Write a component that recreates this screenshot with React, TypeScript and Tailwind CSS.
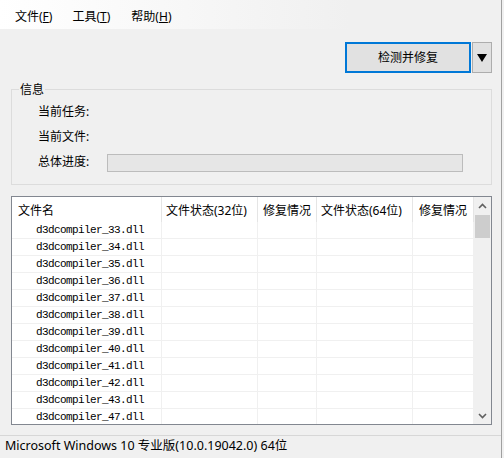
import React from "react";

const rows = ["33", "34", "35", "36", "37", "38", "39", "40", "41", "42", "43", "47"];

const cols = [
  { cls: "w-[150px] pl-[6px]", label: "文件名" },
  { cls: "w-[96px] pl-[4px]", label: "文件状态(32位)" },
  { cls: "w-[59px] pl-[5px]", label: "修复情况" },
  { cls: "w-[96px] pl-[4px]", label: "文件状态(64位)" },
  { cls: "w-[61px] pl-[6px]", label: "修复情况" },
];

export default function App() {
  return (
    <div className="w-[504px] h-[458px] bg-[#f0f0f0] flex overflow-hidden text-[12px] text-black font-['Noto_Sans','Noto_Sans_CJK_SC',sans-serif]">
      <div className="w-[502px] h-full border-r border-[#a0a0a0] flex flex-col">
        {/* Menu bar */}
        <div className="h-[29px] flex items-start pt-[8px] pl-[15px] bg-linear-to-r from-white to-[#f0f0f0] to-70% leading-[18px]">
          <span className="mr-[20px]">文件(<span className="underline">F</span>)</span>
          <span className="mr-[21px]">工具(<span className="underline">T</span>)</span>
          <span>帮助(<span className="underline">H</span>)</span>
        </div>

        {/* Buttons */}
        <div className="mt-[13px] ml-[345px] flex h-[31px]">
          <div className="w-[126px] h-[31px] border-2 border-[#0078d7] bg-[#e1e1e1] flex items-center justify-center">
            检测并修复
          </div>
          <div className="ml-[1px] w-[20px] h-[31px] border border-[#adadad] bg-[#e1e1e1] flex items-center justify-center">
            <svg width="10" height="10" viewBox="0 0 10 10">
              <polygon points="0,1 10,1 5,9" fill="#000" />
            </svg>
          </div>
        </div>

        {/* Info group */}
        <div className="relative mt-[16px] ml-[11px] w-[481px] h-[96px] border border-[#dcdcdc] pt-[9px] pl-[26px]">
          <span className="absolute left-[7px] top-[-8px] px-[1px] bg-[#f0f0f0] leading-[16px]">信息</span>
          <div className="h-[25px] flex items-center">当前任务:</div>
          <div className="h-[25px] flex items-center">当前文件:</div>
          <div className="h-[25px] flex items-center">
            <span className="w-[69px]">总体进度:</span>
            <div className="mt-[3px] w-[356px] h-[18px] border border-[#bcbcbc] bg-[#e6e6e6]" />
          </div>
        </div>

        {/* List view */}
        <div className="mt-[11px] ml-[11px] w-[481px] h-[229px] border border-[#828790] bg-white flex overflow-hidden">
          <div className="w-[462px] flex flex-col">
            <div className="h-[25px] flex shrink-0">
              {cols.map((c, i) => (
                <div key={i} className={`${c.cls} h-full border-r border-[#e5e5e5] flex items-center pt-[2px] whitespace-nowrap`}>
                  {c.label}
                </div>
              ))}
            </div>
            {rows.map((r) => (
              <div key={r} className="h-[17px] shrink-0 flex border-b border-[#f0f0f0]">
                {cols.map((c, i) => (
                  <div key={i} className={`${c.cls} h-full border-r border-[#f0f0f0] flex items-center`}>
                    {i === 0 ? (
                      <span className="pl-[18px] font-['Liberation_Mono',monospace] text-[11px] tracking-[-0.6px] leading-[16px]">
                        d3dcompiler_{r}.dll
                      </span>
                    ) : null}
                  </div>
                ))}
              </div>
            ))}
          </div>
          {/* Scrollbar */}
          <div className="w-[17px] h-full bg-[#f0f0f0] flex flex-col items-center">
            <div className="h-[17px] w-full flex items-center justify-center">
              <svg width="9" height="6" viewBox="0 0 9 6">
                <polyline points="1,5 4.5,1.5 8,5" fill="none" stroke="#606060" strokeWidth="1.6" />
              </svg>
            </div>
            <div className="mt-[1px] w-[15px] h-[23px] bg-[#cdcdcd]" />
            <div className="flex-1" />
            <div className="h-[17px] w-full flex items-center justify-center">
              <svg width="9" height="6" viewBox="0 0 9 6">
                <polyline points="1,1 4.5,4.5 8,1" fill="none" stroke="#606060" strokeWidth="1.6" />
              </svg>
            </div>
          </div>
        </div>

        {/* Status bar */}
        <div className="mt-[10px] border-t border-[#d7d7d7] flex-1 flex items-center pl-[5px] pb-[1px] text-[12.5px]">
          Microsoft Windows 10 专业版(10.0.19042.0) 64位
        </div>
      </div>
    </div>
  );
}
